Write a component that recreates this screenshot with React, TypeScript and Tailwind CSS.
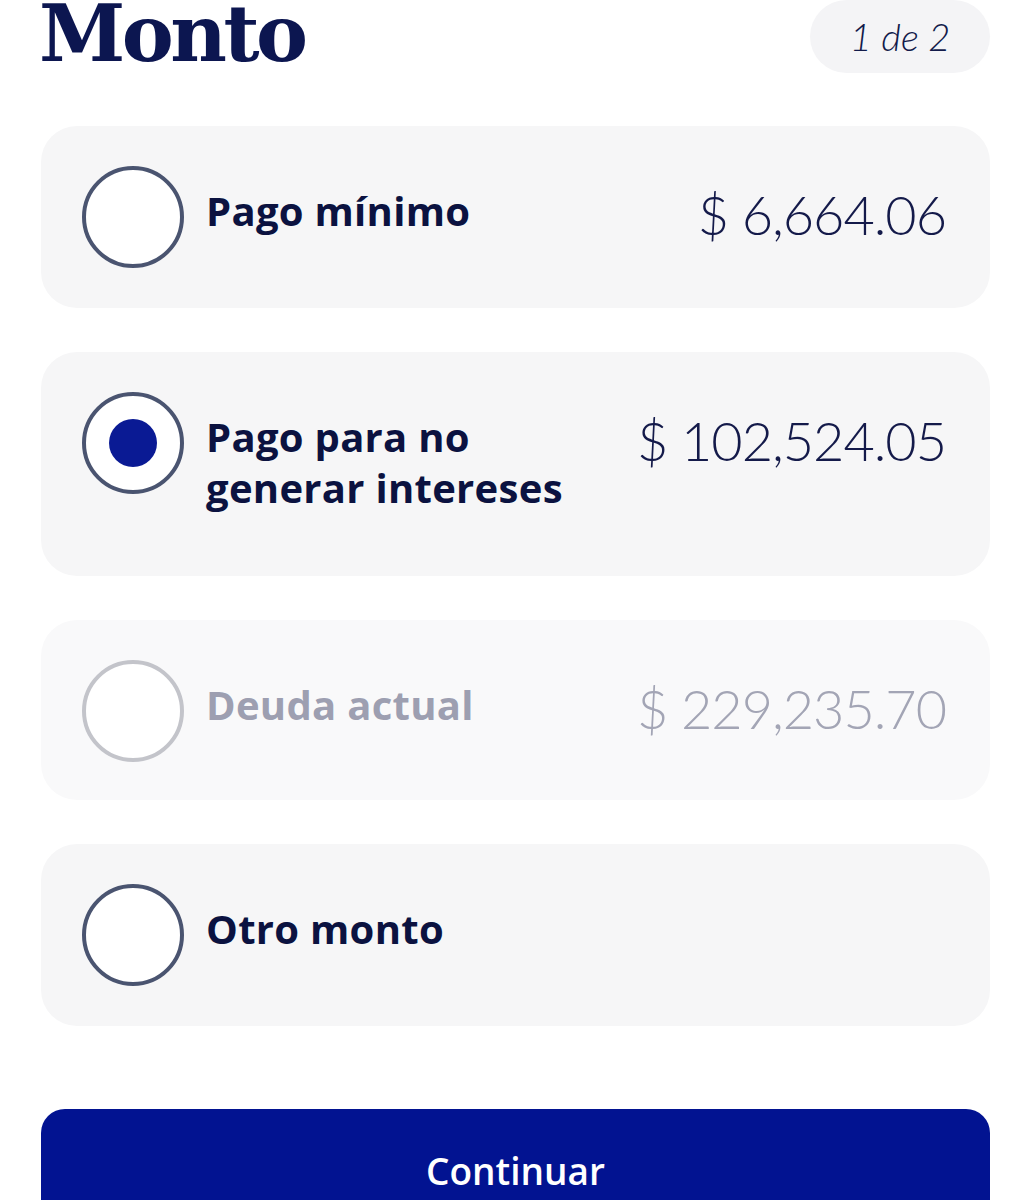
type Option = {
  label: string[];
  amount?: string;
  selected?: boolean;
  disabled?: boolean;
  height: string;
};

const options: Option[] = [
  { label: ['Pago mínimo'], amount: '$ 6,664.06', height: 'h-[182px]' },
  { label: ['Pago para no', 'generar intereses'], amount: '$ 102,524.05', selected: true, height: 'h-[224px]' },
  { label: ['Deuda actual'], amount: '$ 229,235.70', disabled: true, height: 'h-[180px]' },
  { label: ['Otro monto'], height: 'h-[182px]' },
];

function Radio({ selected, disabled }: { selected?: boolean; disabled?: boolean }) {
  return (
    <div
      className={`flex h-[102px] w-[102px] shrink-0 items-center justify-center rounded-full border-[4px] bg-white ${
        disabled ? 'border-[#c3c4ca]' : 'border-[#4a5470]'
      }`}
    >
      {selected && <div className="h-[48px] w-[48px] rounded-full bg-[#0a1a94]" />}
    </div>
  );
}

export default function App() {
  return (
    <div className="min-h-[1200px] overflow-hidden bg-white px-[41px] font-['Lato',sans-serif]">
      <div className="flex h-[73px] items-start justify-between">
        <h1 className="-ml-[2px] -mt-[5px] font-['DejaVu_Serif',serif] text-[78px] font-bold leading-none tracking-[-3.5px] text-[#0c1650]">
          Monto
        </h1>
        <div className="flex h-[73px] w-[180px] items-center justify-center rounded-full bg-[#f4f4f6]">
          <span className="text-[38px] font-light italic text-[#121a4a]">1 de 2</span>
        </div>
      </div>

      <div className="mt-[53px] flex flex-col gap-[44px]">
        {options.map((o, i) => (
          <div
            key={i}
            className={`flex items-start rounded-[36px] pl-[41px] pr-[44px] pt-[40px] ${o.height} ${
              o.disabled ? 'bg-[#f9f9fa]' : 'bg-[#f6f6f7]'
            }`}
          >
            <Radio selected={o.selected} disabled={o.disabled} />
            <div className="ml-[22px] mt-[19px] flex flex-1 items-start justify-between">
              <div
                className={`font-['Open_Sans',sans-serif] text-[40px] font-bold leading-[51px] tracking-[0.3px] ${
                  o.disabled ? 'text-[#9d9fb1]' : 'text-[#0b1240]'
                }`}
              >
                {o.label.map((l) => (
                  <div key={l}>{l}</div>
                ))}
              </div>
              {o.amount && (
                <div
                  className={`mt-[4px] text-[54px] font-light leading-[51px] tracking-[-1px] ${
                    o.disabled ? 'text-[#a3a5b5]' : 'text-[#141a4a]'
                  }`}
                >
                  {o.amount}
                </div>
              )}
            </div>
          </div>
        ))}
      </div>

      <button className="mt-[83px] flex h-[124px] w-full items-center justify-center rounded-[24px] bg-[#021391] font-['Open_Sans',sans-serif] text-[37px] font-semibold text-white">
        Continuar
      </button>
    </div>
  );
}
